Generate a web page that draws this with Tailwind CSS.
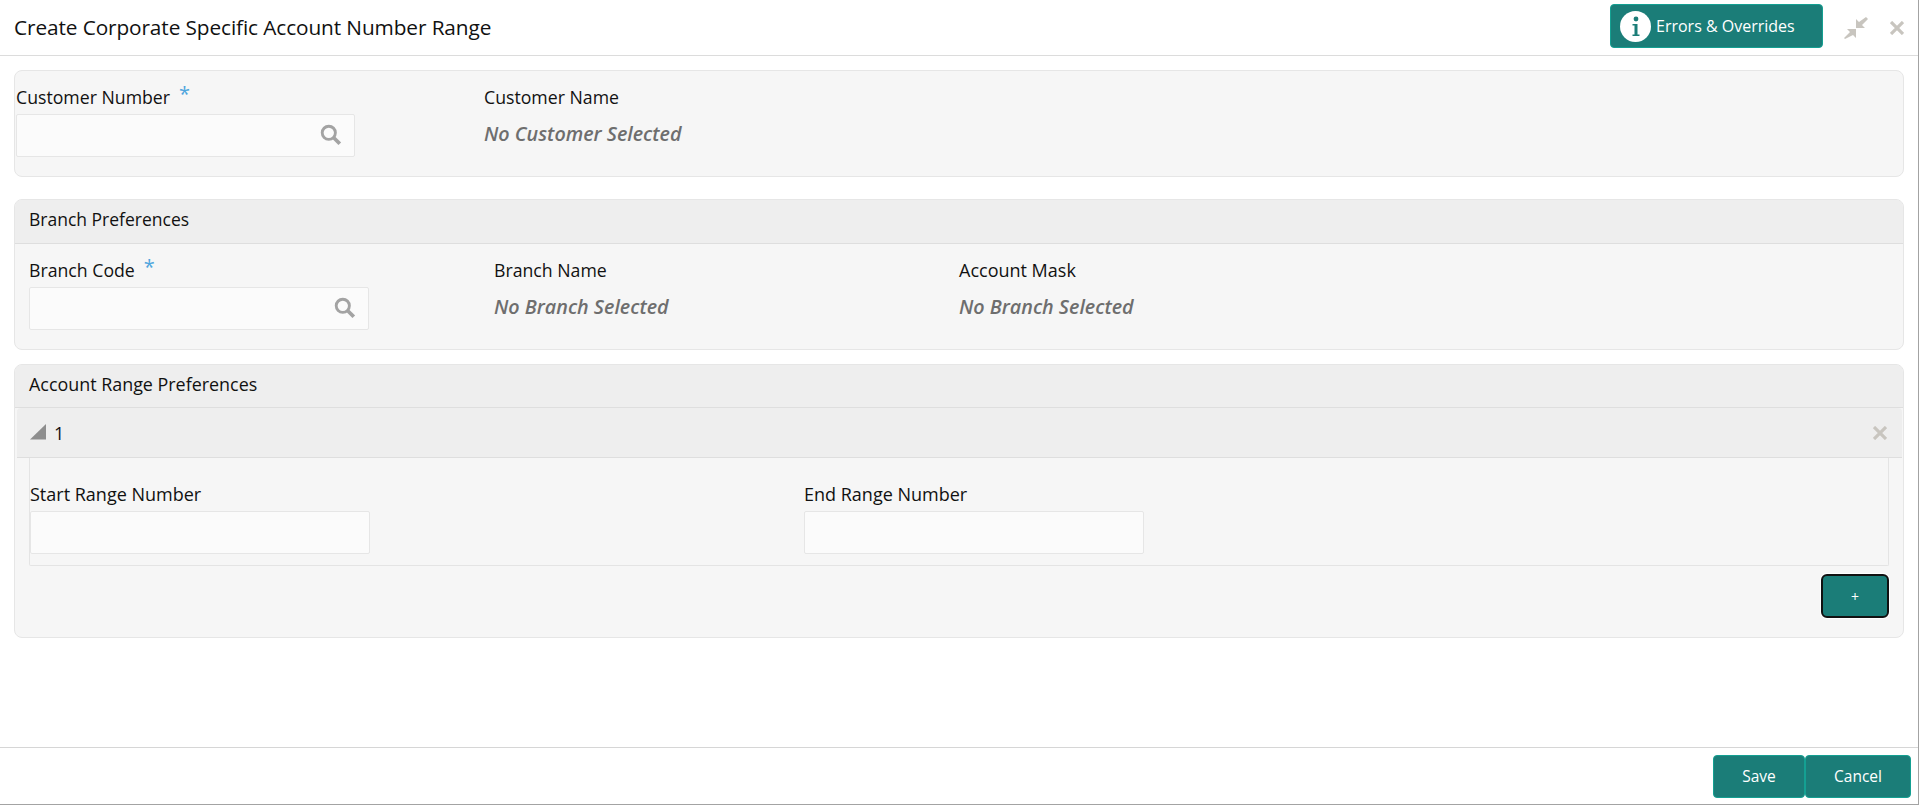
<!DOCTYPE html>
<html lang="en">
<head>
    <meta charset="UTF-8">
    <title>Create Corporate Specific Account Number Range</title>
    <script src="https://cdn.jsdelivr.net/npm/@tailwindcss/browser@4"></script>
</head>
<body class="bg-white overflow-hidden font-['Open_Sans',sans-serif] text-[17.700px] text-[#111]">
    <div class="w-[1919px] h-[805px] flex flex-col border-r border-b border-[#a3a3a3]">

        <!-- Header -->
        <header class="h-[56px] shrink-0 flex items-center border-b border-[#dcdcdc] pl-[14px] pr-[14px]">
            <h1 class="text-[20.800px] font-normal tracking-[-0.1px] mt-[1px]">Create Corporate Specific Account Number Range</h1>
            <button class="ml-auto w-[213px] h-[44px] mb-[3px] flex items-center rounded-[4px] border border-[#14a092] bg-[#1b7d78] text-white pl-[9px]">
                <span class="w-[31px] h-[31px] rounded-full bg-white flex items-center justify-center">
                    <svg width="10" height="21" viewBox="0 0 10 21"><circle cx="5" cy="3" r="2.4" fill="#1b7d78"/><path d="M1.5 8h5v10.5h2V20H1.5v-1.5h2V9.500h-2z" fill="#1b7d78"/></svg>
                </span>
                <span class="ml-[5px] text-[16px]">Errors &amp; Overrides</span>
            </button>
            <svg class="ml-[21px]" width="24" height="24" viewBox="0 0 24 24" fill="#c8c5bf">
                <path d="M22 1l2 2-6 6 3 3H12V3l3 3z"/>
                <path d="M1 23l-1-1 6-6-3-3h9v9l-3-3z"/>
            </svg>
            <svg class="ml-[22px]" width="14" height="14" viewBox="0 0 14 14" stroke="#c8c5bf" stroke-width="3.200"><path d="M1 1l12 12M13 1L1 13"/></svg>
        </header>

        <main class="flex-1 px-[14px] pt-[14px] flex flex-col gap-[14px]">

            <!-- Customer -->
            <section class="h-[107px] mb-[8px] rounded-lg border border-[#e6e6e6] bg-[#f6f6f6] pl-[1px] pt-[14px] flex">
                <div class="w-[468px]">
                    <label class="flex h-[24px] items-center leading-[24px]">Customer Number<span class="text-[#4ea5dd] text-[20px] ml-[9px] -mt-[6px]">*</span></label>
                    <div class="mt-[5px] w-[339px] h-[43px] flex justify-end rounded-[2px] border border-[#e6e6e6] bg-[#fbfbfb]">
                        <span class="w-[52px] flex items-center justify-center pl-[6px] pb-[2px]">
                            <svg width="22" height="22" viewBox="0 0 20 20" fill="none" stroke="#a3a3a3"><circle cx="8" cy="8" r="6" stroke-width="2.600"/><path d="M12.500 12.500l5.500 5.500" stroke-width="3.400"/></svg>
                        </span>
                    </div>
                </div>
                <div>
                    <label class="block h-[24px] leading-[24px]">Customer Name</label>
                    <p class="mt-[13px] italic font-semibold text-[19.700px] text-[#6e6e6e] leading-[24px]">No Customer Selected</p>
                </div>
            </section>

            <!-- Branch -->
            <section class="h-[151px] rounded-lg border border-[#e6e6e6] bg-[#f6f6f6] overflow-hidden">
                <div class="h-[44px] flex items-center pl-[14px] pb-[4px] text-[17.500px] bg-[#eeeeee] border-b border-[#dedede]">Branch Preferences</div>
                <div class="pl-[14px] pt-[14px] flex">
                    <div class="w-[465px]">
                        <label class="flex h-[24px] items-center">Branch Code<span class="text-[#4ea5dd] text-[20px] ml-[9px] -mt-[6px]">*</span></label>
                        <div class="mt-[5px] w-[340px] h-[43px] flex justify-end rounded-[2px] border border-[#e6e6e6] bg-[#fbfbfb]">
                            <span class="w-[52px] flex items-center justify-center pl-[6px] pb-[2px]">
                                <svg width="22" height="22" viewBox="0 0 20 20" fill="none" stroke="#a3a3a3"><circle cx="8" cy="8" r="6" stroke-width="2.600"/><path d="M12.500 12.500l5.500 5.500" stroke-width="3.400"/></svg>
                            </span>
                        </div>
                    </div>
                    <div class="w-[465px]">
                        <label class="block h-[24px] leading-[24px]">Branch Name</label>
                        <p class="mt-[13px] italic font-semibold text-[19.700px] text-[#6e6e6e] leading-[24px]">No Branch Selected</p>
                    </div>
                    <div>
                        <label class="block h-[24px] leading-[24px] text-[18px]">Account Mask</label>
                        <p class="mt-[13px] italic font-semibold text-[19.700px] text-[#6e6e6e] leading-[24px]">No Branch Selected</p>
                    </div>
                </div>
            </section>

            <!-- Account range -->
            <section class="h-[274px] rounded-lg border border-[#e6e6e6] bg-[#f6f6f6] overflow-hidden">
                <div class="h-[43px] flex items-center pl-[14px] pb-[4px] text-[17.900px] bg-[#eeeeee] border-b border-[#dedede]">Account Range Preferences</div>
                <div class="ml-[2px] mr-[1px] h-[50px] flex items-center rounded-t-[4px] bg-[#eeeeee] border-b border-[#dedede] pl-[13px] pr-[15px]">
                    <svg width="16" height="16" viewBox="0 0 16 16" class="-mt-[2px]"><path d="M0 15.500L16 0v15.500z" fill="#8e8e8e"/></svg>
                    <span class="ml-[8px] text-[18px] mt-[2px]">1</span>
                    <svg class="ml-auto" width="14" height="14" viewBox="0 0 14 14" stroke="#c8c5bf" stroke-width="3.200"><path d="M1 1l12 12M13 1L1 13"/></svg>
                </div>
                <div class="ml-[14px] w-[1860px] h-[108px] flex border-l border-r border-b border-[#e4e4e4] rounded-b-[2px] pt-[24px] text-[18px]">
                    <div class="w-[774px]">
                        <label class="block h-[24px] leading-[24px]">Start Range Number</label>
                        <div class="mt-[5px] w-[340px] h-[43px] rounded-[2px] border border-[#e6e6e6] bg-[#fbfbfb]"></div>
                    </div>
                    <div>
                        <label class="block h-[24px] leading-[24px]">End Range Number</label>
                        <div class="mt-[5px] w-[340px] h-[43px] rounded-[2px] border border-[#e6e6e6] bg-[#fbfbfb]"></div>
                    </div>
                </div>
                <div class="flex justify-end pr-[14px] pt-[8px]">
                    <button class="w-[68px] h-[44px] rounded-[6px] border-2 border-[#111] bg-[#1b7d78] text-white text-[14px] ring-1 ring-white">+</button>
                </div>
            </section>
        </main>

        <!-- Footer -->
        <footer class="h-[57px] shrink-0 border-t border-[#d6d6d6] flex justify-end items-start pt-[7px] pr-[7px]">
            <button class="w-[92px] h-[43px] rounded-[4px] border border-[#14a092] bg-[#1b7d78] text-white text-[15.500px]">Save</button>
            <button class="w-[106px] h-[43px] rounded-[4px] border border-[#14a092] bg-[#1b7d78] text-white text-[15.500px]">Cancel</button>
        </footer>
    </div>
</body>
</html>
